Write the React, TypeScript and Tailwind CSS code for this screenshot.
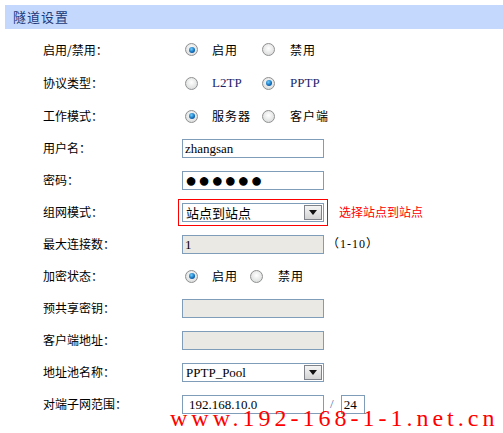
import React from "react";

const cjk = "font-['Noto_Sans_CJK_SC',sans-serif]";
const serif = "font-['Liberation_Serif','Noto_Sans_CJK_SC',serif]";

const Radio = ({ checked }: { checked?: boolean }) => (
  <span className="relative inline-block w-[13px] h-[13px] shrink-0 rounded-full border border-[#8f9091] bg-[radial-gradient(circle_at_50%_40%,#ffffff,#d2d3d4)]">
    {checked && (
      <span className="absolute left-[2.5px] top-[2.5px] w-[6px] h-[6px] rounded-full bg-[radial-gradient(circle_at_40%_35%,#6fd0ff,#0d69b8_60%,#06406f)]" />
    )}
  </span>
);

const Row = ({
  label,
  h,
  children,
}: {
  label: string;
  h: string;
  children?: React.ReactNode;
}) => (
  <div className={`flex items-center ${h}`}>
    <div className={`w-[182px] shrink-0 pl-[43px] text-[12px] text-black ${cjk}`}>
      {label}
    </div>
    <div className="flex items-center">{children}</div>
  </div>
);

const TextBox = ({
  value,
  disabled,
  w = "w-[142px]",
  className = "",
}: {
  value?: string;
  disabled?: boolean;
  w?: string;
  className?: string;
}) => (
  <div
    className={`${w} h-[19px] border border-[#7f9db9] flex items-center px-[2px] text-[13px] leading-none text-black ${serif} ${
      disabled ? "bg-[#ebe9e3]" : "bg-white"
    } ${className}`}
  >
    {value}
  </div>
);

const Select = ({ value, cjkText }: { value: string; cjkText?: boolean }) => (
  <div className="w-[142px] h-[19px] border border-[#7f9db9] bg-white flex items-center">
    <div
      className={`flex-1 pl-[3px] text-[13px] leading-none text-black ${
        cjkText ? cjk : serif
      }`}
    >
      {value}
    </div>
    <div className="w-[18px] h-[15px] mr-px border border-[#80838a] bg-[linear-gradient(#f5f5f5,#d3d3d3)] flex items-center justify-center">
      <svg width="8" height="5" viewBox="0 0 8 5">
        <path d="M0 0h8L4 5z" fill="#111" />
      </svg>
    </div>
  </div>
);

const RadioPair = ({
  a,
  b,
  first,
  gap = "w-[50px]",
  serifText,
}: {
  a: string;
  b: string;
  first: boolean;
  gap?: string;
  serifText?: boolean;
}) => {
  const txt = serifText
    ? `text-[13px] text-[#1a1f6a] ${serif}`
    : `text-[12px] tracking-[1px] text-black ${cjk}`;
  return (
    <div className="flex items-center pl-[3px]">
      <Radio checked={first} />
      <span className={`ml-[14px] ${gap} ${txt}`}>{a}</span>
      <Radio checked={!first} />
      <span className={`ml-[15px] ${txt}`}>{b}</span>
    </div>
  );
};

export default function App() {
  return (
    <div className="relative w-[503px] h-[433px] bg-white overflow-hidden">
      <div className="mt-[5px] ml-[5px] h-[24px] bg-[#c4d8fe] flex items-center pl-[8px]">
        <span className={`text-[13px] tracking-[1px] text-[#1b3878] ${cjk}`}>隧道设置</span>
      </div>
      <div className="mt-[4px]">
        <Row label="启用/禁用：" h="h-[33px]">
          <RadioPair a="启用" b="禁用" first />
        </Row>
        <Row label="协议类型：" h="h-[34px]">
          <RadioPair a="L2TP" b="PPTP" first={false} serifText />
        </Row>
        <Row label="工作模式：" h="h-[32px]">
          <RadioPair a="服务器" b="客户端" first />
        </Row>
        <Row label="用户名：" h="h-[32px]">
          <TextBox value="zhangsan" />
        </Row>
        <Row label="密码：" h="h-[32px]">
          <TextBox
            value={"●●●●●●"}
            className="text-[20px] tracking-[1px] font-['DejaVu_Sans',sans-serif]"
          />
        </Row>
        <Row label="组网模式：" h="h-[32px]">
          <div className="-ml-[4px] border border-[#ff0000] px-[3px] py-[3px]">
            <Select value="站点到站点" cjkText />
          </div>
          <span className={`ml-[11px] text-[12px] text-[#ff0000] ${cjk}`}>选择站点到站点</span>
        </Row>
        <Row label="最大连接数：" h="h-[32px]">
          <TextBox value="1" disabled />
          <span className={`ml-[3px] text-[12px] tracking-[1px] text-black ${serif}`}>（1-10）</span>
        </Row>
        <Row label="加密状态：" h="h-[32px]">
          <RadioPair a="启用" b="禁用" first gap="w-[38px]" />
        </Row>
        <Row label="预共享密钥：" h="h-[32px]">
          <TextBox disabled />
        </Row>
        <Row label="客户端地址：" h="h-[32px]">
          <TextBox disabled />
        </Row>
        <Row label="地址池名称：" h="h-[32px]">
          <Select value="PPTP_Pool" />
        </Row>
        <Row label="对端子网范围：" h="h-[32px]">
          <TextBox value="192.168.10.0" className="pl-[6px]" />
          <span className={`ml-[6px] mr-[7px] text-[13px] text-[#4a6fb0] ${serif}`}>/</span>
          <TextBox value="24" w="w-[24px]" />
        </Row>
      </div>
      <div
        className={`absolute left-[170px] top-[406px] text-[24px] leading-none tracking-[4px] text-[#ff0000] ${serif}`}
      >
        www.192-168-1-1.net.cn
      </div>
    </div>
  );
}
